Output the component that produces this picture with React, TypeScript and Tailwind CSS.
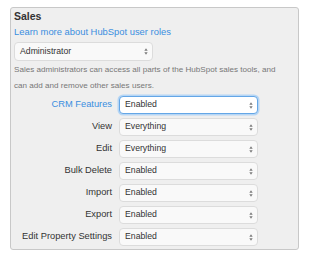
const rows = [
  { label: "CRM Features", value: "Enabled", active: true },
  { label: "View", value: "Everything" },
  { label: "Edit", value: "Everything" },
  { label: "Bulk Delete", value: "Enabled" },
  { label: "Import", value: "Enabled" },
  { label: "Export", value: "Enabled" },
  { label: "Edit Property Settings", value: "Enabled" },
];

function Arrows() {
  return (
    <svg width="4" height="7" viewBox="0 0 4 7" className="shrink-0">
      <path d="M2 0.3 L3.7 2.8 L0.3 2.8 Z" fill="#7a7a7a" />
      <path d="M2 6.7 L3.7 4.2 L0.3 4.2 Z" fill="#7a7a7a" />
    </svg>
  );
}

function Select({ value, active, className }: { value: string; active?: boolean; className: string }) {
  return (
    <div
      className={
        "flex items-center justify-between rounded-[4px] pl-[5px] pr-[4px] text-[8.7px] text-[#333] " +
        (active
          ? "border border-[#64a6e6] bg-white shadow-[0_0_0_1.5px_#b6d6f5] "
          : "border border-[#dcdcdc] bg-[#f9f9f9] ") +
        className
      }
    >
      <span>{value}</span>
      <Arrows />
    </div>
  );
}

export default function App() {
  return (
    <div className="min-h-[263px] w-[310px] bg-white pl-[10px] pt-[7px] font-['Liberation_Sans',Arial,sans-serif]">
      <div className="w-[289px] rounded-[3px] border border-[#c8c8c8] bg-[#efefef] pb-[3px] pl-[3px] pt-[0px]">
        <div className="text-[10.5px] font-bold leading-[16px] text-[#333]">Sales</div>
        <div className="mt-[1px] text-[9.4px] leading-[14px] text-[#3a8ee0]">Learn more about HubSpot user roles</div>
        <Select value="Administrator" className="mt-[3px] h-[19px] w-[139px]" />
        <p className="mt-[1px] whitespace-nowrap text-[8.1px] leading-[16px] text-[#777]">
          Sales administrators can access all parts of the HubSpot sales tools, and
          <br />
          can add and remove other sales users.
        </p>
        <div className="mt-[2px] flex flex-col gap-[4px]">
          {rows.map((r) => (
            <div key={r.label} className="flex items-center">
              <div
                className={
                  "w-[98px] whitespace-nowrap text-right text-[9.3px] " +
                  (r.active ? "text-[#3a8ee0]" : "text-[#333]")
                }
              >
                {r.label}
              </div>
              <Select value={r.value} active={r.active} className="ml-[7px] h-[18px] w-[139px]" />
            </div>
          ))}
        </div>
      </div>
    </div>
  );
}
